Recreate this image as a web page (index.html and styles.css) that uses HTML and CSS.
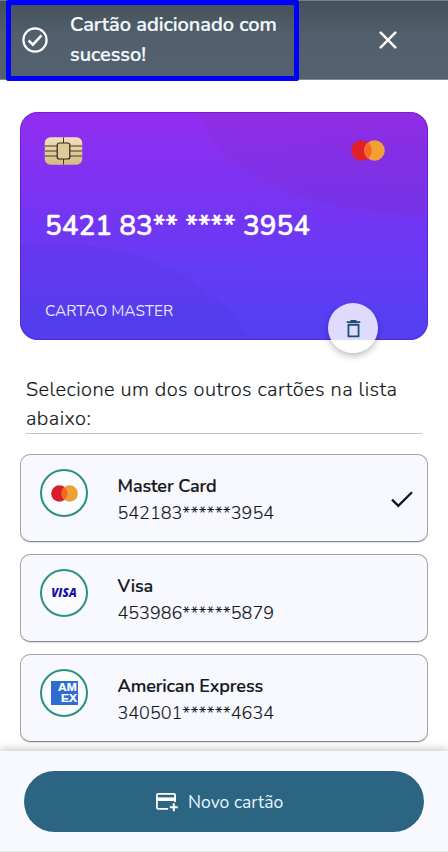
FILE: index.html
```html
<!DOCTYPE html>
<html lang="pt-BR">
<head>
<meta charset="utf-8">
<title>Cartões</title>
<link rel="stylesheet" href="styles.css">
</head>
<body>
<div class="app">
  <header class="toast">
    <div class="toast-highlight">
      <svg class="toast-icon" viewBox="0 0 26 26" fill="none" stroke="#fff" stroke-width="2.2"><circle cx="13" cy="13" r="11.6"/><path d="M6.6 13.5l4.3 4.1 8.6-9.2" stroke-width="2.5"/></svg>
      <p class="toast-text">Cartão adicionado com<br>sucesso!</p>
    </div>
    <svg class="close" viewBox="0 0 18 18" fill="none" stroke="#fff" stroke-width="2.5" stroke-linecap="round"><path d="M1.7 1.7l14.6 14.6M16.3 1.7L1.7 16.3"/></svg>
  </header>

  <main class="content">
    <section class="card">
      <svg class="card-waves" viewBox="0 0 408 228"><defs><linearGradient id="fade" x1="0" y1="0" x2="1" y2="0"><stop offset="0" stop-color="#702050" stop-opacity=".06"/><stop offset="1" stop-color="#702050" stop-opacity=".08"/></linearGradient></defs><path d="M179 0C197 66 300 103 408 103V0Z" fill="url(#fade)"/><path d="M0 132C90 126 180 150 231 228H0Z" fill="#302080" fill-opacity=".06"/></svg>
      <div class="card-top">
        <svg class="chip" viewBox="0 0 38 28">
          <defs><linearGradient id="gold" x1="0" y1="0" x2="0" y2="1"><stop offset="0" stop-color="#f2dfbd"/><stop offset="1" stop-color="#d3bc80"/></linearGradient></defs>
          <rect x=".3" y=".3" width="37.4" height="27.4" rx="5.5" fill="url(#gold)"/>
          <path d="M.5 9H12.500M.5 14H12.500M.5 19H12.500M25.500 9H37.500M25.500 14H37.500M25.500 19H37.500M19 .5V6M19 22V27.500" stroke="#45381f" stroke-width="1"/>
          <rect x="12.700" y="6" width="12.600" height="16" rx="2" fill="#e0cb98" stroke="#30261b" stroke-width="1.200"/>
        </svg>
        <svg class="card-brand" viewBox="0 0 34 21"><circle cx="10.500" cy="10.500" r="10.300" fill="#df2029"/><circle cx="23.500" cy="10.500" r="10.300" fill="#f0a035"/><path d="M17 2.500a10.300 10.300 0 0 1 0 16a10.300 10.300 0 0 1 0-16Z" fill="#fb6728"/></svg>
      </div>
      <div class="card-number">5421 83** **** 3954</div>
      <div class="card-name">CARTAO MASTER</div>
      <button class="delete" aria-label="Excluir"><svg viewBox="0 0 16 20" fill="none" stroke="#1d4c78" stroke-width="1.900"><path d="M.8 3.200H15.200M4.800 1.900H11.200"/><path d="M2.600 6H13.400V18.500H2.600Z" stroke-linejoin="round"/></svg></button>
    </section>

    <h2 class="heading">Selecione um dos outros cartões na lista<br>abaixo:</h2>

    <ul class="list">
      <li class="item">
        <span class="logo"><svg class="mc" viewBox="0 0 34 21"><circle cx="10.500" cy="10.500" r="10.300" fill="#d91f29"/><circle cx="23.500" cy="10.500" r="10.300" fill="#eda033"/><path d="M17 2.500a10.300 10.300 0 0 1 0 16a10.300 10.300 0 0 1 0-16Z" fill="#f06a25"/></svg></span>
        <div class="info"><div class="name">Master Card</div><div class="number">542183******3954</div></div>
        <svg class="check" viewBox="0 0 22 17" fill="none" stroke="#111418" stroke-width="2.300"><path d="M1 8.600L7.300 14.900L21 1.200"/></svg>
      </li>
      <li class="item">
        <span class="logo"><span class="visa">VISA</span></span>
        <div class="info"><div class="name">Visa</div><div class="number">453986******5879</div></div>
      </li>
      <li class="item">
        <span class="logo"><span class="amex"><span>AM</span><span class="ex">EX</span></span></span>
        <div class="info"><div class="name">American Express</div><div class="number">340501******4634</div></div>
      </li>
    </ul>
  </main>

  <footer class="footer">
    <button class="new-card">
      <svg viewBox="0 0 22 19" fill="none" stroke="#fff" stroke-width="1.800"><path d="M12.200 15.800H2.200Q.9 15.800.9 14.500V2.200Q.9.900 2.200.900H17.800Q19.100.900 19.100 2.200V9"/><path d="M1 6.200H19" stroke-width="3.600"/><path d="M17.800 10.200V18.200M13.800 14.200H21.800" stroke-width="2"/></svg>
      <span>Novo cartão</span>
    </button>
  </footer>
</div>
</body>
</html>
```

FILE: styles.css
```css
* { box-sizing: border-box; margin: 0; padding: 0; }
body { width: 448px; height: 852px; overflow: hidden; background: #fff; font-family: Nunito, Lato, "Open Sans", sans-serif; color: #15181b; }
button { border: 0; font: inherit; }
svg { display: block; flex: none; }
.app { height: 852px; display: flex; flex-direction: column; }

.toast { height: 80px; flex: none; display: flex; align-items: flex-start; padding-left: 6px; background: linear-gradient(#44515a, #51606c 45%, #53626e); border-top: 1px solid #7b7f81; border-bottom: 1px solid #7d8b94; }
.toast-highlight { width: 293px; height: 81px; flex: none; margin-top: -1px; border: 5px solid #0000fe; border-radius: 2px; display: flex; padding-left: 11px; position: relative; }
.toast-icon { width: 26px; height: 26px; margin-top: 22px; }
.toast-text { margin: 5px 0 0 22px; font-size: 20px; line-height: 30px; font-weight: 600; letter-spacing: -.05px; color: #f6f9fb; white-space: nowrap; -webkit-text-stroke: .2px #f6f9fb; }
.close { width: 18px; height: 18px; margin: 30px 0 0 80px; }

.content { flex: 1; min-height: 0; overflow: hidden; padding: 32px 20px 0; }
.card { height: 228px; border-radius: 18px; position: relative; padding: 25px 43px 0 24px; color: #fff; background: linear-gradient(#932df0, #7435f3 45%, #653bf6 68%, #5140f2); box-shadow: inset 0 0 0 1px #5618bd88; }
.card-waves { position: absolute; inset: 0; width: 408px; height: 228px; border-radius: 18px; }
.card-top { height: 28px; display: flex; justify-content: space-between; align-items: center; position: relative; }
.chip { width: 39px; height: 28px; margin-top: -1px; }
.card-brand { width: 34px; height: 21px; margin-top: -1px; }
.card-number { position: relative; margin: 43px 0 0 1px; font-size: 28px; line-height: 36px; font-weight: 600; letter-spacing: -.06px; white-space: nowrap; -webkit-text-stroke: .4px #fff; }
.card-name { position: relative; margin: 57px 0 0 1px; font-size: 15.4px; line-height: 20px; color: #e8e3ff; white-space: nowrap; }
.delete { position: absolute; right: 50px; bottom: -13px; width: 50px; height: 50px; border-radius: 50%; background: #ffffffd0; box-shadow: 0 3px 7px #0004; display: grid; place-items: center; }
.delete svg { width: 15px; height: 19px; }

.heading { margin: 35px 6px 0; height: 59px; border-bottom: 1px solid #bfc1c4; font-size: 20px; line-height: 29px; font-weight: 300; letter-spacing: .43px; white-space: nowrap; -webkit-text-stroke: .15px #15181b; }

.list { list-style: none; margin-top: 20px; display: grid; gap: 12px; }
.item { height: 88px; border: 1px solid #a2a5ad; border-bottom-color: #858992; border-radius: 10px; background: #f8f9ff; display: flex; padding: 14px 14px 0 19px; box-shadow: 0 1px 1px #0002; }
.logo { width: 48px; height: 48px; flex: none; border: 2px solid #2b917f; border-radius: 50%; background: #fbfcff; display: flex; align-items: center; justify-content: center; }
.mc { width: 27px; height: 17px; }
.visa { font: italic 800 11.500px/14px "Open Sans", sans-serif; color: #1712a5; letter-spacing: .1px; }
.amex { width: 27px; height: 24px; overflow: hidden; background: #2f6ed0; color: #fff; font: 700 10px/11px "Liberation Sans", sans-serif; padding: 1px 0 0 7px; display: flex; flex-direction: column; align-items: flex-start; -webkit-text-stroke: .2px #fff; }
.amex span { transform: scaleX(1.2); transform-origin: left; }
.amex .ex { margin-left: 3px; }
.info { margin: 4px 0 0 29.500px; white-space: nowrap; }
.name { font-size: 18px; line-height: 27px; font-weight: 600; letter-spacing: -.1px; -webkit-text-stroke: .2px #15181b; }
.number { font-size: 18px; line-height: 27px; font-weight: 300; letter-spacing: 0; -webkit-text-stroke: .15px #15181b; }
.check { width: 22px; height: 17px; margin: 22px 0 0 auto; }

.footer { height: 101px; flex: none; position: relative; background: #f7f9ff; box-shadow: 0 -1px 9px #0004; border-bottom: 1px solid #e5e7ea; padding: 20px 24px 0; }
.new-card { width: 400px; height: 61px; border-radius: 31px; background: #2b6582; color: #e6f7ff; display: flex; align-items: center; padding-left: 132px; gap: 10px; font-size: 17.600px; white-space: nowrap; }
.new-card svg { width: 22px; height: 19px; margin-top: 2px; }
```
